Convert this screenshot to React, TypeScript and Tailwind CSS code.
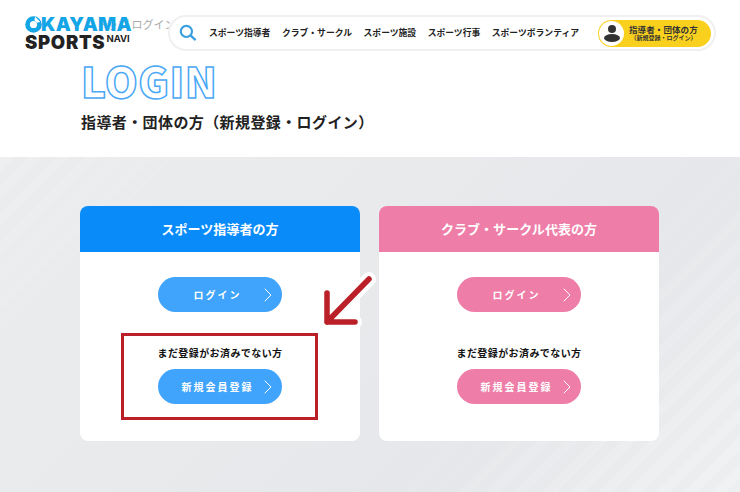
import { ChevronRight } from "lucide-react";

const jp = "font-['Noto_Sans_CJK_JP','Noto_Sans',sans-serif]";

const navItems = ["スポーツ指導者", "クラブ・サークル", "スポーツ施設", "スポーツ行事", "スポーツボランティア"];

const LogoMark = () => (
    <svg viewBox="0 0 20 20" className="w-[17px] h-[17px] shrink-0">
        <circle cx="10" cy="10" r="7" fill="none" stroke="#14a5e6" strokeWidth="5.5" />
        <path d="M10 6 L14 10 L10 14 L6 10 Z" fill="#fff" />
        <path d="M12 1 L18 7 L14 8 L11 5 Z" fill="#fff" />
    </svg>
);

const Logo = () => (
    <div className="relative z-20 flex flex-col w-[110px] font-['Inter',sans-serif] font-black leading-none">
        <div className="flex items-center h-[16px] text-[#14a5e6] text-[19px] tracking-[0.2px]">
            <LogoMark />
            <span className="-ml-[1px]">KAYAMA</span>
        </div>
        <div className="flex items-start h-[17px] text-[#222] mt-[1px]">
            <span className="text-[18.5px] tracking-[0.7px]">SPORTS</span>
            <span className="text-[9.5px] font-bold ml-[1px] mt-[1px]">NAVI</span>
        </div>
    </div>
);

const SearchIcon = () => (
    <svg viewBox="0 0 20 20" className="w-[18px] h-[18px] shrink-0" fill="none">
        <circle cx="8.2" cy="8.2" r="6.2" stroke="#3b9fe0" strokeWidth="2.4" />
        <path d="M13 13 L18.5 18" stroke="#3b9fe0" strokeWidth="2.6" />
    </svg>
);

const UserIcon = () => (
    <span className="flex flex-col items-center justify-center w-[25px] h-[25px] rounded-full bg-white shrink-0">
        <span className="w-[8px] h-[8px] rounded-full bg-[#333]" />
        <span className="w-[16px] h-[8px] mt-[1px] rounded-[50%] bg-[#333]" />
    </span>
);

const Header = () => (
    <header className="relative flex items-center h-[66px] pl-[25px]">
        <Logo />
        <span className={`${jp} absolute left-[96px] top-[16px] text-[11px] text-[#aaa]`}>トップ ログイン指導者</span>
        <div className="relative z-10 ml-[33px] flex items-center w-[548px] h-[36px] rounded-full bg-white border-2 border-[#f0f0f0] pl-[9px] pr-[3px]">
            <SearchIcon />
            <nav className={`${jp} flex items-center gap-[11.5px] ml-[12px] text-[8.8px] font-bold text-[#222] whitespace-nowrap`}>
                {navItems.map(item => (
                    <span key={item}>{item}</span>
                ))}
            </nav>
            <div className="ml-auto flex items-center w-[113px] h-[27px] rounded-full bg-[#fad01e] pl-[1px]">
                <UserIcon />
                <div className={`${jp} flex flex-col items-center ml-[5px] text-[#333] font-bold leading-none`}>
                    <span className="text-[8.5px] tracking-[0.1px]">指導者・団体の方</span>
                    <span className="text-[6px] mt-[2px]">（新規登録・ログイン）</span>
                </div>
            </div>
        </div>
    </header>
);

const Title = () => (
    <div className="flex flex-col h-[91px] pl-[81px]">
        <h1 className={`${jp} text-[42px] leading-[35px] h-[35px] font-black text-white tracking-[0.5px] [-webkit-text-stroke:1.5px_#4aa8f5] -mt-[4px]`}>
            LOGIN
        </h1>
        <p className={`${jp} mt-[15px] text-[15px] leading-[20px] font-bold text-[#222] whitespace-nowrap tracking-[0.4px]`}>
            指導者・団体の方（新規登録・ログイン）
        </p>
    </div>
);

const Button = ({ label, color }: { label: string; color: string }) => (
    <div className={`${color} ${jp} relative flex items-center justify-center w-[124px] h-[35px] pr-[5px] rounded-full text-white text-[10px] font-bold tracking-[2px]`}>
        <span>{label}</span>
        <ChevronRight size={24} strokeWidth={1} className="absolute right-[2px] top-[6px]" />
    </div>
);

const Card = ({
    title,
    headClass,
    buttonClass,
}: {
    title: string;
    headClass: string;
    buttonClass: string;
}) => (
    <div className="w-[280px] h-[235px] rounded-[8px] bg-white overflow-hidden flex flex-col items-center">
        <div className={`${headClass} ${jp} w-full h-[46px] flex items-center justify-center text-white text-[13px] font-bold tracking-[0.05px]`}>
            {title}
        </div>
        <div className="mt-[25px]">
            <Button label="ログイン" color={buttonClass} />
        </div>
        <p className={`${jp} mt-[33px] h-[24px] text-[10px] leading-[15px] font-bold text-[#111] tracking-[0.42px]`}>
            まだ登録がお済みでない方
        </p>
        <Button label="新規会員登録" color={buttonClass} />
    </div>
);

const Arrow = () => (
    <svg viewBox="0 0 56 56" className="absolute left-[320px] top-[118px] w-[56px] h-[56px] z-10 overflow-visible" fill="none" strokeLinecap="round" strokeLinejoin="round">
        <path d="M49 4 L7 47 M7 18 L7 47 L35 47" stroke="#fff" strokeWidth="14" />
        <path d="M49 4 L7 47 M7 18 L7 47 L35 47" stroke="#bb2028" strokeWidth="5.5" />
    </svg>
);

export default function App() {
    return (
        <div className="w-[740px] h-[492px] overflow-hidden bg-white">
            <Header />
            <Title />
            <main className="relative h-[335px] pt-[49px] bg-[#e9eaec] bg-[linear-gradient(135deg,#ebecee_0%,#e9eaec_40%,#e5e7ea_72%,#eeeff0_100%)]">
                <div className="absolute inset-0 bg-[repeating-linear-gradient(-45deg,transparent_0,transparent_10px,rgba(255,255,255,0.18)_10px,rgba(255,255,255,0.18)_20px)] [mask-image:linear-gradient(135deg,#000_0%,transparent_22%,transparent_60%,#000_90%)]" />
                <div className="relative flex gap-[19px] pl-[80px]">
                    <Card title="スポーツ指導者の方" headClass="bg-[#0a8bfa]" buttonClass="bg-[#40a4fc]" />
                    <Card title="クラブ・サークル代表の方" headClass="bg-[#ee7ea8]" buttonClass="bg-[#ee7ea8]" />
                </div>
                <div className="absolute left-[121px] top-[176px] w-[197px] h-[87px] border-[3px] border-[#bb2028]" />
                <Arrow />
            </main>
        </div>
    );
}
